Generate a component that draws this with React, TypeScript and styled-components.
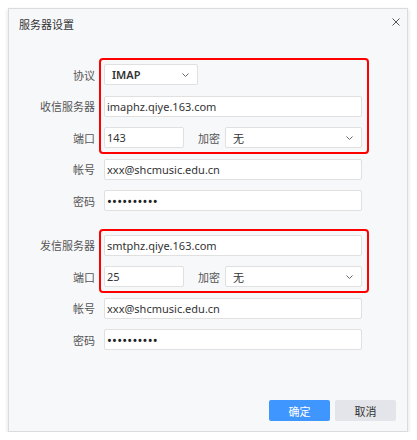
import React, { FC } from "react";
import styled, { createGlobalStyle } from "styled-components";

const GlobalStyle = createGlobalStyle`
  html, body {
    margin: 0;
    padding: 0;
    background: #ffffff;
    font-family: "Noto Sans", "Noto Sans CJK SC", sans-serif;
  }
`;

const Dialog = styled.div`
  box-sizing: border-box;
  margin: 8px 0 0 8px;
  width: 400px;
  height: 424px;
  border: 1px solid #dcdcdc;
  background: #f7f8fa;
  box-shadow: 0 2px 4px rgba(0, 0, 0, 0.14);
  display: flex;
  flex-direction: column;
`;

const Header = styled.div`
  display: flex;
  justify-content: space-between;
  align-items: flex-start;
  padding: 9px 7px 0 10px;
`;

const Title = styled.div`
  font-size: 11px;
  line-height: 14px;
  color: #333;
`;

const CloseButton = styled.button`
  border: 0;
  padding: 0;
  background: none;
  width: 8px;
  height: 8px;
  display: flex;
  cursor: pointer;
`;

const Form = styled.div`
  margin-top: 32px;
  padding-right: 45px;
  display: flex;
  flex-direction: column;
  gap: 10.6px;
`;

const Group = styled.div<{ $highlight?: boolean; $spaced?: boolean }>`
  position: relative;
  display: flex;
  flex-direction: column;
  gap: 10.6px;
  margin-top: ${(p) => (p.$spaced ? "12.7px" : "0")};

  ${(p) =>
    p.$highlight &&
    `
    &::after {
      content: "";
      position: absolute;
      top: -6px;
      bottom: -6px;
      left: 90px;
      right: -7px;
      border: 2px solid #ff0000;
      border-radius: 4px;
      pointer-events: none;
    }
  `}
`;

const Row = styled.div`
  display: grid;
  grid-template-columns: 86px 1fr;
  column-gap: 9px;
  align-items: center;
  height: 21px;
`;

const Label = styled.label<{ $inline?: boolean }>`
  font-size: 11px;
  color: #555;
  text-align: right;
  white-space: nowrap;
  margin: ${(p) => (p.$inline ? "0 5px 0 12px" : "0")};
  width: ${(p) => (p.$inline ? "24px" : "auto")};
`;

const Input = styled.input<{ $width?: number }>`
  box-sizing: border-box;
  height: 21px;
  width: ${(p) => (p.$width ? `${p.$width}px` : "100%")};
  border: 1px solid #e0e0e0;
  border-radius: 2px;
  background: #fff;
  padding: 0 2px;
  font-family: "Noto Sans", "Noto Sans CJK SC", sans-serif;
  font-size: 11px;
  color: #333;
  outline: none;
`;

const Password = styled(Input)`
  font-size: 13px;
  letter-spacing: 0.2px;
  color: #222;
`;

const Select = styled.div<{ $width?: number; $bold?: boolean }>`
  box-sizing: border-box;
  height: 21px;
  width: ${(p) => (p.$width ? `${p.$width}px` : "auto")};
  flex: ${(p) => (p.$width ? "none" : "1")};
  border: 1px solid #e0e0e0;
  border-radius: 2px;
  background: #fff;
  padding: 0 8px 0 7px;
  display: flex;
  align-items: center;
  justify-content: space-between;
  font-size: 11px;
  font-weight: ${(p) => (p.$bold ? 600 : 400)};
  color: #333;
  cursor: pointer;
`;

const Inline = styled.div`
  display: flex;
  align-items: center;
`;

const Footer = styled.div`
  margin-top: auto;
  display: flex;
  justify-content: flex-end;
  gap: 5px;
  padding: 0 11px 10px 0;
`;

const Button = styled.button<{ $primary?: boolean }>`
  width: 61px;
  height: 21px;
  border: 0;
  border-radius: 2px;
  font-family: "Noto Sans", "Noto Sans CJK SC", sans-serif;
  font-size: 11px;
  background: ${(p) => (p.$primary ? "#4096ff" : "#e3e5ea")};
  color: ${(p) => (p.$primary ? "#fff" : "#333")};
  cursor: pointer;
`;

const Chevron: FC = () => (
  <svg width="7" height="4" viewBox="0 0 7 4" fill="none">
    <path d="M0.5 0.5 L3.5 3.5 L6.5 0.5" stroke="#666" strokeWidth="1" />
  </svg>
);

const PortRow: FC<{ port: string }> = ({ port }) => (
  <Row>
    <Label>端口</Label>
    <Inline>
      <Input $width={80} defaultValue={port} />
      <Label $inline>加密</Label>
      <Select>
        <span>无</span>
        <Chevron />
      </Select>
    </Inline>
  </Row>
);

const AccountRows: FC = () => (
  <>
    <Row>
      <Label>帐号</Label>
      <Input defaultValue="xxx@shcmusic.edu.cn" />
    </Row>
    <Row>
      <Label>密码</Label>
      <Password type="password" defaultValue="1234567890" />
    </Row>
  </>
);

const App: FC = () => {
  return (
    <>
      <GlobalStyle />
      <Dialog>
        <Header>
          <Title>服务器设置</Title>
          <CloseButton aria-label="关闭">
            <svg width="8" height="8" viewBox="0 0 8 8">
              <path d="M0.5 0.5 L7.5 7.5 M7.5 0.5 L0.5 7.5" stroke="#555" strokeWidth="1" />
            </svg>
          </CloseButton>
        </Header>
        <Form>
          <Group $highlight>
            <Row>
              <Label>协议</Label>
              <Select $width={94} $bold>
                <span>IMAP</span>
                <Chevron />
              </Select>
            </Row>
            <Row>
              <Label>收信服务器</Label>
              <Input defaultValue="imaphz.qiye.163.com" />
            </Row>
            <PortRow port="143" />
          </Group>
          <AccountRows />
          <Group $highlight $spaced>
            <Row>
              <Label>发信服务器</Label>
              <Input defaultValue="smtphz.qiye.163.com" />
            </Row>
            <PortRow port="25" />
          </Group>
          <AccountRows />
        </Form>
        <Footer>
          <Button $primary>确定</Button>
          <Button>取消</Button>
        </Footer>
      </Dialog>
    </>
  );
};

export default App;
